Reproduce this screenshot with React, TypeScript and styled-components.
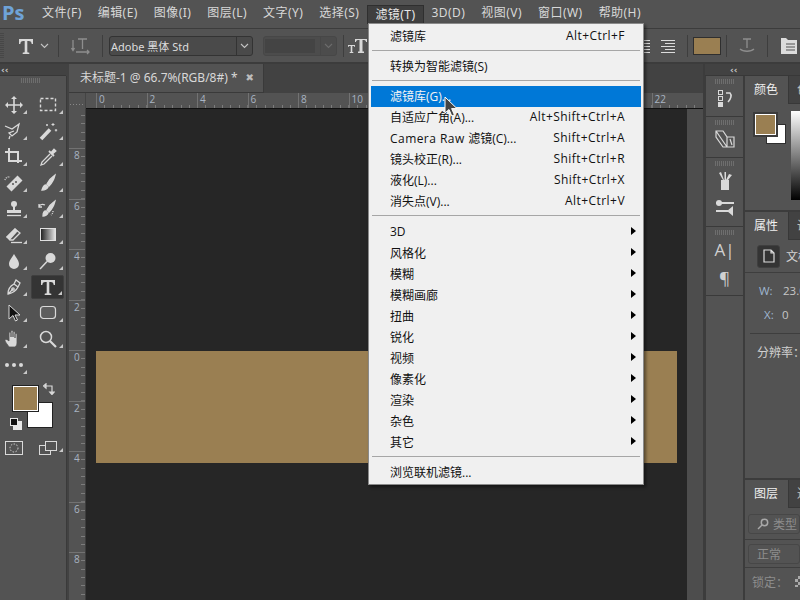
import React from "react";
import styled, { createGlobalStyle, css } from "styled-components";

const FONT = `"Noto Sans", "Noto Sans CJK SC", sans-serif`;
const MENU_FONT = `"Open Sans", "Noto Sans CJK SC", sans-serif`;

const Global = createGlobalStyle`
  html, body { margin: 0; padding: 0; background: #535353; }
  * { box-sizing: border-box; }
`;

const App_ = styled.div`
  position: relative;
  width: 800px;
  height: 600px;
  overflow: hidden;
  background: #535353;
  font: 12px ${FONT};
  color: #d4d4d4;
  display: flex;
  flex-direction: column;
`;

/* ---------- menu bar ---------- */
const MenuBar = styled.div`
  height: 29px;
  flex: none;
  display: flex;
  align-items: center;
  padding-bottom: 3px;
  background: #535353;
  border-bottom: 1px solid #3c3c3c;
`;
const Logo = styled.div`
  width: 34px;
  padding-left: 2px;
  font: bold 20px "Open Sans", sans-serif;
  color: #6fa3d8;
  line-height: 24px;
`;
const MenuItem = styled.div<{ $open?: boolean }>`
  padding: 0 8px;
  height: 20px;
  line-height: 20px;
  white-space: nowrap;
  color: #d8d8d8;
  font-size: 12px;
  letter-spacing: 0.45px;
  ${(p) =>
    p.$open &&
    css`
      background: #3f3f3f;
      border: 1px solid #2f2f2f;
      border-bottom: none;
      line-height: 18px;
      padding: 0 7px;
      margin-top: 4px;
      height: 19px;
      color: #e8e8e8;
    `}
`;

/* ---------- options bar ---------- */
const OptionsBar = styled.div`
  height: 35px;
  flex: none;
  display: flex;
  align-items: center;
  background: #535353;
  border-bottom: 2px solid #3c3c3c;
  position: relative;
`;
const OptGrip = styled.div`
  width: 4px;
  height: 26px;
  background: repeating-linear-gradient(to bottom, #474747 0 1px, transparent 1px 2px);
`;
const OptSep = styled.div<{ $ml: number }>`
  width: 1px;
  height: 22px;
  margin-left: ${(p) => p.$ml}px;
  background: #3e3e3e;
  flex: none;
`;
const OptIcon = styled.div<{ $ml: number }>`
  margin-left: ${(p) => p.$ml}px;
  display: flex;
  flex: none;
`;
const Select = styled.div<{ $w: number; $ml: number; $off?: boolean }>`
  width: ${(p) => p.$w}px;
  margin-left: ${(p) => p.$ml}px;
  height: 20px;
  flex: none;
  border: 1px solid ${(p) => (p.$off ? "#474747" : "#333")};
  border-radius: 3px;
  background: ${(p) => (p.$off ? "#4c4c4c" : "#4a4a4a")};
  display: flex;
  align-items: center;
  font-size: 11px;
  color: #dcdcdc;
  padding-left: 1px;
  white-space: nowrap;
`;
const SelectText = styled.div`
  flex: 1;
  min-width: 0;
`;
const SelectBlank = styled.div`
  flex: 1;
  height: 14px;
  margin-right: 5px;
  background: #444;
`;
const SelectArrow = styled.div<{ $off?: boolean }>`
  width: 16px;
  height: 100%;
  flex: none;
  border-left: 1px solid ${(p) => (p.$off ? "#474747" : "#333")};
  display: flex;
  align-items: center;
  justify-content: center;
`;
const ColorChip = styled.div`
  width: 28px;
  height: 18px;
  margin-left: 5px;
  flex: none;
  background: #9a7f52;
  border: 1px solid #2f2f2f;
`;

/* ---------- body ---------- */
const Body = styled.div`
  flex: 1;
  min-height: 0;
  display: flex;
`;
const CollapseStrip = styled.div`
  height: 12px;
  flex: none;
  background: #424242;
  border-bottom: 1px solid #383838;
  display: flex;
  align-items: center;
  font: bold 9px/10px "DejaVu Sans", sans-serif;
  color: #c8c8c8;
`;

/* tools */
const LeftCol = styled.div`
  width: 69px;
  flex: none;
  display: flex;
  flex-direction: column;
  border-right: 3px solid #424242;
`;
const LeftCollapse = styled(CollapseStrip)`
  padding-left: 1px;
`;
const ToolPanel = styled.div`
  flex: 1;
  padding-top: 2px;
  border-right: 1px solid #3a3a3a;
  margin-right: -1px;
`;
const Grip = styled.div<{ $w?: number }>`
  width: ${(p) => p.$w ?? 20}px;
  height: 5px;
  margin: 0 auto;
  background: repeating-linear-gradient(to right, #6e6e6e 0 1px, transparent 1px 2px);
`;
const ToolGrip = styled(Grip)`
  margin: 0 0 9px 21px;
`;
const ToolGrid = styled.div`
  display: grid;
  grid-template-columns: 28px 33px;
  grid-auto-rows: 26px;
  column-gap: 3px;
`;
const Tool = styled.div<{ $active?: boolean; $corner?: boolean }>`
  position: relative;
  display: flex;
  align-items: center;
  justify-content: center;
  margin: 1px 0;
  border-radius: 2px;
  ${(p) => p.$active && css`background: #343434; border: 1px solid #3f3f3f;`}
  ${(p) =>
    p.$corner !== false &&
    css`
      &::after {
        content: "";
        position: absolute;
        right: 1px;
        bottom: 3px;
        border-style: solid;
        border-width: 0 0 4px 4px;
        border-color: transparent transparent #c8c8c8 transparent;
      }
    `}
`;
const SwatchBox = styled.div`
  position: relative;
  height: 40px;
  margin-top: 8px;
  margin-bottom: 14px;
`;
const SwatchFg = styled.div`
  position: absolute;
  left: 13px;
  top: 0;
  width: 25px;
  height: 25px;
  background: #9a7f52;
  border: 1px solid #fff;
  outline: 1px solid #222;
  z-index: 1;
`;
const SwatchBg = styled.div`
  position: absolute;
  left: 27px;
  top: 16px;
  width: 26px;
  height: 26px;
  background: #fff;
  border: 1px solid #222;
`;
const SwapIcon = styled.div`
  position: absolute;
  left: 43px;
  top: -3px;
  display: flex;
`;
const DefaultsIcon = styled.div`
  position: absolute;
  left: 10px;
  top: 32px;
  display: flex;
`;
const ModeRow = styled.div`
  display: grid;
  grid-template-columns: 28px 33px;
  column-gap: 3px;
`;

/* document */
const DocArea = styled.div`
  width: 636px;
  flex: none;
  display: flex;
  flex-direction: column;
  border-right: 2px solid #3c3c3c;
`;
const TabBar = styled.div`
  height: 29px;
  flex: none;
  background: #424242;
  display: flex;
`;
const DocTab = styled.div`
  width: 195px;
  background: #535353;
  border-right: 1px solid #3a3a3a;
  border-bottom: 1px solid #3a3a3a;
  display: flex;
  align-items: center;
  padding: 0 0 2px 11px;
  font-size: 12px;
  color: #d8d8d8;
  white-space: nowrap;
`;
const TabClose = styled.span`
  margin-left: 8px;
  font: bold 10px "DejaVu Sans", sans-serif;
  color: #bdbdbd;
`;
const DocBody = styled.div`
  flex: 1;
  min-height: 0;
  display: grid;
  grid-template-columns: 17px 601px 1fr;
  grid-template-rows: 16px 1fr;
  background: #4d4d4d;
`;
const RulerCorner = styled.div`
  background: #535353;
  position: relative;
  border-right: 1px solid #444;
  background-image: radial-gradient(#888 0.5px, transparent 0.6px);
  background-size: 3px 3px;
  background-position: 0 10px;
  background-repeat: repeat-x;
`;
const HRuler = styled.div`
  grid-column: 2 / 4;
  background: #535353;
  display: flex;
  overflow: hidden;
  padding-left: 10px;
  border-bottom: 1px solid #111;
`;
const HCell = styled.div`
  width: 50.5px;
  flex: none;
  padding-left: 2px;
  border-left: 1px solid #727272;
  font: 10px/13px "Open Sans", sans-serif;
  color: #a9b4c2;
  background-image: repeating-linear-gradient(to right, transparent 0 7.4px, #7c7c7c 7.4px 8.4px);
  background-size: 100% 3px;
  background-position: bottom;
  background-repeat: no-repeat;
`;
const VRuler = styled.div`
  background: #535353;
  overflow: hidden;
  border-right: 1px solid #3d3d3d;
`;
const VTrack = styled.div`
  margin-top: -11.5px;
`;
const VCell = styled.div`
  height: 50.5px;
  border-top: 1px solid #727272;
  padding: 0 0 0 5px;
  font: 10px/13px "Open Sans", sans-serif;
  color: #a9b4c2;
  background-image: repeating-linear-gradient(to bottom, transparent 0 7.4px, #7c7c7c 7.4px 8.4px);
  background-size: 4px 100%;
  background-position: right;
  background-repeat: no-repeat;
`;
const Canvas = styled.div`
  background: #262626;
  padding: 242px 10px 0;
`;
const Band = styled.div`
  height: 112px;
  background: #9a7f52;
`;

/* right dock */
const DockCol = styled.div`
  flex: 1;
  min-width: 0;
  display: flex;
  flex-direction: column;
`;
const DockCollapse = styled(CollapseStrip)`
  justify-content: flex-start;
  padding-left: 25px;
`;
const DockRow = styled.div`
  flex: 1;
  min-height: 0;
  display: flex;
`;
const IconDock = styled.div`
  width: 40px;
  flex: none;
  border-right: 2px solid #3c3c3c;
  border-left: 1px solid #3c3c3c;
`;
const DockGroup = styled.div<{ $h: number }>`
  height: ${(p) => p.$h}px;
  border-bottom: 1px solid #3a3a3a;
  padding-top: 3px;
  display: flex;
  flex-direction: column;
  align-items: center;
`;
const DockBtn = styled.div<{ $h: number }>`
  height: ${(p) => p.$h}px;
  display: flex;
  align-items: center;
  justify-content: center;
`;
const DockLetter = styled.div`
  font: 17px/27px "Open Sans", sans-serif;
  color: #d0d0d0;
`;
const Panels = styled.div`
  flex: 1;
  min-width: 0;
  display: flex;
  flex-direction: column;
  overflow: hidden;
`;
const Panel = styled.div<{ $h?: number }>`
  ${(p) => (p.$h ? `height:${p.$h}px;` : "flex:1;")}
  flex-shrink: 0;
  overflow: hidden;
  position: relative;
`;
const PanelGap = styled.div`
  height: 2px;
  background: #3c3c3c;
  flex: none;
`;
const Tabs = styled.div`
  height: 28px;
  background: #424242;
  display: flex;
  white-space: nowrap;
`;
const PanelTab = styled.div<{ $on?: boolean }>`
  width: ${(p) => (p.$on ? "44px" : "60px")};
  flex: none;
  padding-left: ${(p) => (p.$on ? "9px" : "8px")};
  line-height: 27px;
  font-size: 12px;
  background: ${(p) => (p.$on ? "#535353" : "#424242")};
  color: ${(p) => (p.$on ? "#f0f0f0" : "#bcbcbc")};
  border-right: ${(p) => (p.$on ? "1px solid #383838" : "none")};
  border-bottom: ${(p) => (p.$on ? "none" : "1px solid #383838")};
`;
const ColorBody = styled.div`
  position: relative;
  display: flex;
  height: 100px;
`;
const PanelFg = styled.div`
  position: absolute;
  left: 10px;
  top: 10px;
  width: 21px;
  height: 21px;
  background: #9a7f52;
  border: 1px solid #fff;
  outline: 2px solid #3c3c3c;
  z-index: 1;
`;
const PanelBg = styled.div`
  position: absolute;
  left: 21px;
  top: 20px;
  width: 20px;
  height: 20px;
  background: #fff;
  border: 1px solid #2e2e2e;
`;
const Spectrum = styled.div`
  margin: 7px 0 0 46px;
  width: 12px;
  height: 89px;
  background: linear-gradient(to bottom, #fff, #000);
`;
const DocRow = styled.div`
  height: 33px;
  display: flex;
  align-items: center;
  padding-left: 12px;
  gap: 6px;
  border-bottom: 1px solid #3e3e3e;
  white-space: nowrap;
`;
const DocBtn = styled.div`
  width: 23px;
  height: 23px;
  flex: none;
  background: #343434;
  border: 1px solid #3f3f3f;
  border-radius: 3px;
  display: flex;
  align-items: center;
  justify-content: center;
`;
const Prop = styled.div<{ $pl: number; $h: number }>`
  height: ${(p) => p.$h}px;
  padding-left: ${(p) => p.$pl}px;
  display: flex;
  align-items: center;
  white-space: nowrap;
  color: #c6c6c6;
  font: 11.5px "Open Sans", "Noto Sans CJK SC", sans-serif;
`;
const PropKey = styled.span<{ $w: number }>`
  width: ${(p) => p.$w}px;
  color: #9fb6d0;
  flex: none;
`;
const PropLine = styled.div`
  height: 1px;
  margin: 11px 0 0 5px;
  background: #3e3e3e;
`;
const ResLabel = styled.div`
  padding: 9px 0 0 12px;
  white-space: nowrap;
  color: #d0d0d0;
`;
const LayerRow = styled.div<{ $h: number }>`
  height: ${(p) => p.$h}px;
  display: flex;
  align-items: center;
  padding-left: 3px;
  border-bottom: 1px solid #3e3e3e;
  color: #8d8d8d;
`;
const LayerField = styled.div`
  width: 100%;
  height: 20px;
  border: 1px solid #474747;
  border-radius: 3px;
  display: flex;
  align-items: center;
  gap: 4px;
  padding-left: 8px;
  white-space: nowrap;
`;
const LockLabel = styled.div`
  display: flex;
  align-items: center;
  height: 27px;
  padding-left: 7px;
  gap: 7px;
  color: #8d8d8d;
  white-space: nowrap;
`;
const Checker = styled.div`
  width: 11px;
  height: 11px;
  background: conic-gradient(#aaa 25%, #555 0 50%, #aaa 0 75%, #555 0) 0 0 / 6px 6px;
`;

/* dropdown */
const Dropdown = styled.div`
  position: absolute;
  left: 368px;
  top: 23px;
  width: 276px;
  height: 462px;
  padding: 2px 2px;
  background: #f0f0f0;
  border: 1px solid #8a8a8a;
  box-shadow: 2px 2px 3px rgba(0, 0, 0, 0.45);
  font: 12px ${MENU_FONT};
  color: #111;
  z-index: 5;
`;
const DropRow = styled.div<{ $hi?: boolean }>`
  height: 21px;
  display: flex;
  align-items: center;
  padding: 0 16px 2px 19px;
  white-space: nowrap;
  position: relative;
  ${(p) => p.$hi && css`background: #0078d7; color: #f4f4f4;`}
`;
const DropLabel = styled.span`
  flex: 1;
`;
const Spaced = styled.span`
  letter-spacing: 0.45px;
`;
const SubArrow = styled.span`
  position: absolute;
  right: 5px;
  top: 5px;
  border-style: solid;
  border-width: 4px 0 4px 5px;
  border-color: transparent transparent transparent #000;
`;
const DropSep = styled.div<{ $mb?: number }>`
  height: 1px;
  margin: 3px 1px ${(p) => p.$mb ?? 5}px;
  background: #a6a6a6;
`;
const Cursor = styled.div`
  position: absolute;
  left: 444px;
  top: 96px;
  z-index: 6;
  display: flex;
`;

/* ---------- icons ---------- */
const C = "#d9d9d9";
const Ic = ({ s = 20, children }: { s?: number; children: React.ReactNode }) => (
  <svg width={s} height={s} viewBox={`0 0 ${s} ${s}`} fill="none" stroke={C} strokeWidth="1.3">
    {children}
  </svg>
);
const Chevron = ({ color = "#c4c4c4" }: { color?: string }) => (
  <svg width="9" height="6" viewBox="0 0 9 6" fill="none" stroke={color} strokeWidth="1.1">
    <path d="M1 1l3.5 3.5L8 1" />
  </svg>
);
const TGlyph = ({ size = 18 }: { size?: number }) => (
  <svg width={size} height={size} viewBox="0 0 18 18" fill={C} stroke="none">
    <path d="M2 2h14v5h-1.3c-.2-2-.9-3-3-3H10.300v10.600c0 .9.5 1.100 2 1.200V17H5.700v-1.200c1.500-.1 2-.3 2-1.200V4H6.300c-2.100 0-2.800 1-3 3H2z" />
  </svg>
);
const tools: React.ReactNode[] = [
  <Ic key="move"><path d="M10 2v16M2 10h16" strokeWidth="1.6" /><path d="M10 1l-3 3h6zM10 19l-3-3h6zM1 10l3-3v6zM19 10l-3-3v6z" fill={C} stroke="none" /></Ic>,
  <Ic key="marq"><rect x="2.500" y="3.500" width="15" height="12" strokeDasharray="3 2" strokeWidth="1.400" /></Ic>,
  <Ic key="lasso"><path d="M1 5l7 3 7-5-2 8-5 4-3-3 5-2M6 15l-1 3" /></Ic>,
  <Ic key="wand"><path d="M3 18L12 8.500" strokeWidth="3.600" /><path d="M15 2v3M13.500 3.500h3M18 8v2.500M16.800 9.200h2.400M9 3v2M8 4h2" strokeWidth="1" /></Ic>,
  <Ic key="crop"><path d="M1 5h13v11M5 1v13h13" strokeWidth="2" /></Ic>,
  <Ic key="drop"><path d="M12 7l-8 8-1 3 3-1 8-8" /><path d="M11 4l5 5M13 6l3-3.500 1.500 1.500-3.500 3z" fill={C} strokeWidth="1.800" /></Ic>,
  <Ic key="heal"><path d="M5 16L16 5" strokeWidth="7" /><circle cx="9" cy="11" r="1" fill="#535353" stroke="none" /><circle cx="12" cy="9" r="1" fill="#535353" stroke="none" /><path d="M1 7a4 4 0 0 1 5-3" strokeDasharray="1 1" /></Ic>,
  <Ic key="brush"><path d="M17 2c-3 2-6 5-8 9l2 2c3-3 5-7 6-11z" fill={C} /><path d="M8 12c-2 0-3 2-4 5 3 0 5-1 6-3z" fill={C} /></Ic>,
  <Ic key="stamp"><circle cx="10" cy="5" r="3" fill={C} stroke="none" /><path d="M9 7h2v4H9zM3 11h14v3H3z" fill={C} stroke="none" /><path d="M3 16.500h14" /></Ic>,
  <Ic key="hist"><path d="M17 2c-3 2-6 5-8 9l2 2c3-3 5-7 6-11z" fill={C} /><path d="M8 12c-2 0-3 2-3 5 3 0 4-1 5-3z" fill={C} /><path d="M1 7c2-2 4-2 6-1M1 5v3h3" /><path d="M15 12a5 5 0 0 1-2 4" strokeDasharray="1 1" /></Ic>,
  <Ic key="erase"><path d="M3 12L11 4l5 4-7 7H6z" /><path d="M3 12L11 4l2 2-7 8z" fill={C} /><path d="M7 17.500h11" /></Ic>,
  <svg key="grad" width="20" height="20" viewBox="0 0 20 20">
    <defs>
      <linearGradient id="gr" x1="0" x2="1"><stop offset="0" stopColor="#1c1c1c" /><stop offset="1" stopColor="#e8e8e8" /></linearGradient>
    </defs>
    <rect x="2.500" y="3.500" width="15" height="12" fill="url(#gr)" stroke="#e0e0e0" />
  </svg>,
  <Ic key="blur"><path d="M10 3c-3 5-5 7-5 10a5 5 0 0 0 10 0c0-3-2-5-5-10z" fill={C} stroke="none" /></Ic>,
  <Ic key="dodge"><circle cx="12.500" cy="7" r="5" fill={C} stroke="none" /><path d="M9 10.500L2 18" strokeWidth="1.500" /></Ic>,
  <Ic key="pen"><path d="M4 17c0-5 2-8 6-10l4 3c-2 4-5 6-10 7zM4 17l5-5M10 7l2-4 4 3-2 4" /><circle cx="9" cy="12" r="1.200" /></Ic>,
  <TGlyph key="t" />,
  <Ic key="arrow"><path d="M5 2v14l4-3.500 2.500 5.500 2-1-2.500-5h5z" fill="#111" stroke={C} strokeWidth="1" /></Ic>,
  <Ic key="rrect"><rect x="2.500" y="3.500" width="15" height="12" rx="3" fill="#5d5d5d" strokeWidth="1.200" /></Ic>,
  <Ic key="hand"><path d="M5 18c-1-2-4-5-4-6.500S3 10 5 12V4c0-1.500 2-1.500 2 0v4-5.500c0-1.500 2-1.500 2 0V8 3.500c0-1.500 2-1.500 2 0V9V5.500c0-1.500 2-1.500 2 0V14c0 2-1 3-2 4z" fill={C} strokeWidth="0.800" stroke="#535353" /></Ic>,
  <Ic key="zoom"><circle cx="8" cy="8" r="5.500" strokeWidth="1.500" /><path d="M12 12l6 6" strokeWidth="2.200" /></Ic>,
  <svg key="dots" width="20" height="20" viewBox="0 0 20 20" fill={C}><circle cx="3" cy="10" r="2" /><circle cx="10" cy="10" r="2" /><circle cx="17" cy="10" r="2" /></svg>,
];

const menuTop: [string, boolean?][] = [
  ["文件(F)"], ["编辑(E)"], ["图像(I)"], ["图层(L)"], ["文字(Y)"], ["选择(S)"], ["滤镜(T)", true], ["3D(D)"], ["视图(V)"], ["窗口(W)"], ["帮助(H)"],
];
const group3: [React.ReactNode, string][] = [
  ["滤镜库(G)...", ""],
  ["自适应广角(A)...", "Alt+Shift+Ctrl+A"],
  [<React.Fragment key="c"><Spaced>Camera Raw </Spaced>滤镜(C)...</React.Fragment>, "Shift+Ctrl+A"],
  ["镜头校正(R)...", "Shift+Ctrl+R"],
  ["液化(L)...", "Shift+Ctrl+X"],
  ["消失点(V)...", "Alt+Ctrl+V"],
];
const subs = ["3D", "风格化", "模糊", "模糊画廊", "扭曲", "锐化", "视频", "像素化", "渲染", "杂色", "其它"];
const hLabels = ["0", "2", "4", "6", "8", "10", "12", "14", "16", "18", "20", "22"];
const vLabels = ["", "8", "6", "4", "2", "0", "2", "4", "6", "8"];

export default function App() {
  return (
    <App_>
      <Global />
      <MenuBar>
        <Logo>Ps</Logo>
        {menuTop.map(([t, o]) => (
          <MenuItem key={t} $open={o}>{t}</MenuItem>
        ))}
      </MenuBar>

      <OptionsBar>
        <OptGrip />
        <OptIcon $ml={13}><TGlyph /></OptIcon>
        <OptIcon $ml={5}><Chevron /></OptIcon>
        <OptSep $ml={9} />
        <OptIcon $ml={12}>
          <svg width="20" height="18" viewBox="0 0 20 18" fill="none" stroke="#8e8e8e" strokeWidth="1.300">
            <path d="M7 2h9M11.500 2v10M2 3v10M0.500 11L2 13.500 3.500 11M5 15h13M16 13l2 2-2 2" />
          </svg>
        </OptIcon>
        <OptSep $ml={11} />
        <Select $w={144} $ml={6}>
          <SelectText>Adobe 黑体 Std</SelectText>
          <SelectArrow><Chevron /></SelectArrow>
        </Select>
        <Select $w={74} $ml={10} $off>
          <SelectBlank />
          <SelectArrow $off><Chevron color="#6c6c6c" /></SelectArrow>
        </Select>
        <OptSep $ml={6} />
        <OptIcon $ml={4}>
          <svg width="20" height="16" viewBox="0 0 20 16" fill={C} stroke="none">
            <path d="M7 1h12v3h-1c0-1-.5-2-2-2h-1.500v11.500h1.500V15h-6v-1.500h1.500V2H10c-1.500 0-2 1-2 2H7zM0 7h7v2H6.500c0-.5-.5-1-1-1H4.300v6h1V15H1.700v-1h1V8H1.500c-.5 0-1 .5-1 1H0z" />
          </svg>
        </OptIcon>
        <OptIcon $ml={272}>
          <svg width="16" height="16" viewBox="0 0 16 16" stroke="#dcdcdc" strokeWidth="1">
            <path d="M0 2.500h10M3 5.500h7M0 8.500h10M3 11.500h7M0 14.500h10" />
          </svg>
        </OptIcon>
        <OptIcon $ml={5}>
          <svg width="14" height="16" viewBox="0 0 14 16" stroke="#dcdcdc" strokeWidth="1">
            <path d="M0 2.500h14M4 5.500h10M0 8.500h14M4 11.500h10M0 14.500h14" />
          </svg>
        </OptIcon>
        <OptSep $ml={12} />
        <ColorChip />
        <OptSep $ml={5} />
        <OptIcon $ml={12}>
          <svg width="16" height="18" viewBox="0 0 16 18" fill="none" stroke="#8e8e8e" strokeWidth="1.300">
            <path d="M4 2h8M8 2v9M1 12c3 3 11 3 14 0" />
          </svg>
        </OptIcon>
        <OptSep $ml={12} />
        <OptIcon $ml={13}>
          <svg width="16" height="16" viewBox="0 0 16 16">
            <path d="M0 0h5l2 2h9v14H0z" fill="#dcdcdc" />
            <path d="M5 6h9M5 9h9M5 12h9" stroke="#535353" />
          </svg>
        </OptIcon>
      </OptionsBar>

      <Body>
        <LeftCol>
          <LeftCollapse>‹‹</LeftCollapse>
          <ToolPanel>
            <ToolGrip />
            <ToolGrid>
              {tools.map((t, i) => (
                <Tool key={i} $active={i === 15}>{t}</Tool>
              ))}
            </ToolGrid>
            <SwatchBox>
              <SwatchBg />
              <SwatchFg />
              <SwapIcon>
                <svg width="12" height="12" viewBox="0 0 12 12" fill="none" stroke={C} strokeWidth="1.200">
                  <path d="M2 3h7v7M0.500 3L3 .8V5.200zM9 11.500L6.800 9h4.400z" />
                </svg>
              </SwapIcon>
              <DefaultsIcon>
                <svg width="12" height="12" viewBox="0 0 12 12">
                  <rect x="3" y="3" width="9" height="9" fill="#e8e8e8" />
                  <rect x="0.500" y="0.500" width="7" height="7" fill="#111" stroke="#e8e8e8" />
                </svg>
              </DefaultsIcon>
            </SwatchBox>
            <ModeRow>
              <Tool $corner={false}>
                <svg width="18" height="14" viewBox="0 0 18 14" fill="none" stroke={C}>
                  <rect x="0.500" y="0.500" width="17" height="13" />
                  <circle cx="9" cy="7" r="4" strokeDasharray="1.500 1.500" />
                </svg>
              </Tool>
              <Tool>
                <svg width="18" height="14" viewBox="0 0 18 14" fill="none" stroke={C}>
                  <rect x="0.500" y="4.500" width="11" height="9" />
                  <rect x="6.500" y="0.500" width="11" height="9" fill="#535353" />
                </svg>
              </Tool>
            </ModeRow>
          </ToolPanel>
        </LeftCol>

        <DocArea>
          <TabBar>
            <DocTab>
              未标题-1 @ 66.7%(RGB/8#) *
              <TabClose>✖</TabClose>
            </DocTab>
          </TabBar>
          <DocBody>
            <RulerCorner />
            <HRuler>
              {hLabels.map((l) => (
                <HCell key={l}>{l}</HCell>
              ))}
            </HRuler>
            <VRuler>
              <VTrack>
                {vLabels.map((l, i) => (
                  <VCell key={i}>{l}</VCell>
                ))}
              </VTrack>
            </VRuler>
            <Canvas>
              <Band />
            </Canvas>
          </DocBody>
        </DocArea>

        <DockCol>
          <DockCollapse>‹‹</DockCollapse>
          <DockRow>
            <IconDock>
              <DockGroup $h={41}>
                <Grip />
                <DockBtn $h={27}>
                  <svg width="18" height="18" viewBox="0 0 18 18" fill="none" stroke={C}>
                    <rect x="2.500" y="1.500" width="4" height="4" />
                    <rect x="2.500" y="7.500" width="4" height="4" />
                    <rect x="2" y="13" width="5" height="5" fill={C} stroke="none" />
                    <path d="M10 4h4c2 2 1 6-2 9" strokeWidth="1.600" />
                  </svg>
                </DockBtn>
              </DockGroup>
              <DockGroup $h={41}>
                <Grip />
                <DockBtn $h={28}>
                  <svg width="22" height="20" viewBox="0 0 22 20" fill="none" stroke={C} strokeWidth="1.200">
                    <path d="M2 2h7l4 6v10H9L2 8zM2 2l11 16M13 8h7v10h-7M16 10l2 6" />
                  </svg>
                </DockBtn>
              </DockGroup>
              <DockGroup $h={69}>
                <Grip />
                <DockBtn $h={28}>
                  <svg width="16" height="20" viewBox="0 0 16 20" fill={C} stroke="none">
                    <rect x="4" y="10" width="8" height="10" />
                    <path d="M6 10L2 3l2-1 3 8zM7.500 10V2h1.500v8zM9 10l3-6 3 1-4 5z" />
                  </svg>
                </DockBtn>
                <DockBtn $h={27}>
                  <svg width="20" height="16" viewBox="0 0 20 16" fill={C} stroke="none">
                    <path d="M1 2h18v2H1zM4 0a3 3 0 1 1 0 6 3 3 0 0 1 0-6zM1 10h12v2H1zM18 6v10l-6-5z" />
                  </svg>
                </DockBtn>
              </DockGroup>
              <DockGroup $h={69}>
                <Grip />
                <DockBtn $h={29}>
                  <DockLetter>A|</DockLetter>
                </DockBtn>
                <DockBtn $h={26}>
                  <DockLetter>¶</DockLetter>
                </DockBtn>
              </DockGroup>
            </IconDock>
            <Panels>
              <Panel $h={134}>
                <Tabs>
                  <PanelTab $on>颜色</PanelTab>
                  <PanelTab>色板</PanelTab>
                </Tabs>
                <ColorBody>
                  <PanelBg />
                  <PanelFg />
                  <Spectrum />
                </ColorBody>
              </Panel>
              <PanelGap />
              <Panel $h={266}>
                <Tabs>
                  <PanelTab $on>属性</PanelTab>
                  <PanelTab>调整</PanelTab>
                </Tabs>
                <DocRow>
                  <DocBtn>
                    <svg width="12" height="14" viewBox="0 0 12 14" fill="none" stroke="#dcdcdc" strokeWidth="1.200">
                      <path d="M1 1h7l3 3v9H1zM8 1v3h3" />
                    </svg>
                  </DocBtn>
                  文档属性
                </DocRow>
                <Prop $pl={14} $h={34}>
                  <PropKey $w={24}>W:</PropKey>23.01 厘米
                </Prop>
                <Prop $pl={19} $h={15}>
                  <PropKey $w={18}>X:</PropKey>0
                </Prop>
                <PropLine />
                <ResLabel>分辨率：72</ResLabel>
              </Panel>
              <PanelGap />
              <Panel>
                <Tabs>
                  <PanelTab $on>图层</PanelTab>
                  <PanelTab>通道</PanelTab>
                </Tabs>
                <LayerRow $h={32}>
                  <LayerField>
                    <svg width="12" height="12" viewBox="0 0 12 12" fill="none" stroke="#a8a8a8" strokeWidth="1.500">
                      <circle cx="7.500" cy="4.500" r="3.200" />
                      <path d="M5 7l-4 4" />
                    </svg>
                    类型
                  </LayerField>
                </LayerRow>
                <LayerRow $h={28}>
                  <LayerField>正常</LayerField>
                </LayerRow>
                <LockLabel>
                  锁定：
                  <Checker />
                </LockLabel>
              </Panel>
            </Panels>
          </DockRow>
        </DockCol>
      </Body>

      <Dropdown>
        <DropRow><DropLabel>滤镜库</DropLabel><Spaced>Alt+Ctrl+F</Spaced></DropRow>
        <DropSep />
        <DropRow><DropLabel>转换为智能滤镜(S)</DropLabel></DropRow>
        <DropSep />
        {group3.map(([l, s], i) => (
          <DropRow key={i} $hi={i === 0}><DropLabel>{l}</DropLabel>{s && <Spaced>{s}</Spaced>}</DropRow>
        ))}
        <DropSep $mb={6} />
        {subs.map((s) => (
          <DropRow key={s}><DropLabel>{s}</DropLabel><SubArrow /></DropRow>
        ))}
        <DropSep />
        <DropRow><DropLabel>浏览联机滤镜...</DropLabel></DropRow>
      </Dropdown>
      <Cursor>
        <svg width="14" height="22" viewBox="0 0 14 22">
          <path d="M1 1v16l4-3.500 2.800 6.500 2.600-1.200-2.800-6.200H13z" fill="#444" stroke="#fff" strokeWidth="1" />
        </svg>
      </Cursor>
    </App_>
  );
}
